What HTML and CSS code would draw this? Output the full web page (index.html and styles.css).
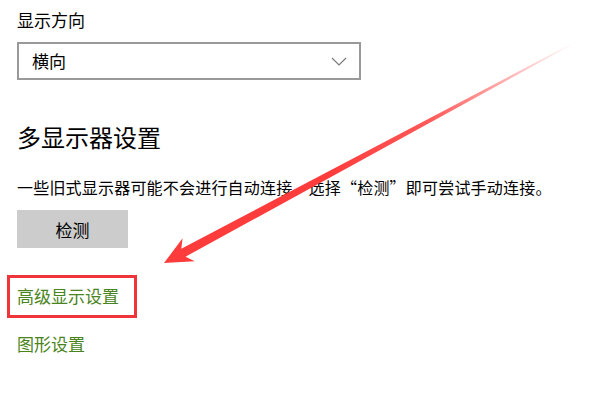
FILE: index.html
```html
<!DOCTYPE html>
<html lang="zh-CN">
<head>
    <meta charset="UTF-8">
    <meta name="viewport" content="width=device-width, initial-scale=1.0">
    <title>显示设置</title>
    <link rel="stylesheet" href="styles.css">
</head>
<body>

    <div id="settings">
        <div class="field-label">显示方向</div>
        <div class="select-box">
            <span class="select-value">横向</span>
            <svg class="chevron" width="16" height="9" viewBox="0 0 16 9">
                <polyline points="1,1 8,8 15,1" fill="none" stroke="#7a7a7a" stroke-width="1.2"/>
            </svg>
        </div>

        <h2 class="section-title">多显示器设置</h2>
        <p class="section-text">一些旧式显示器可能不会进行自动连接，选择“检测”即可尝试手动连接。</p>
        <button class="detect-button">检测</button>

        <div class="marked-box">
            <a href="#" class="setting-link">高级显示设置</a>
        </div>
        <a href="#" class="setting-link graphics-link">图形设置</a>
    </div>

    <!-- red annotation arrow on top of the page -->
    <svg id="arrow" width="600" height="400" viewBox="0 0 600 400">
        <defs>
            <linearGradient id="arrow-fade" gradientUnits="userSpaceOnUse" x1="574" y1="43" x2="164" y2="263">
                <stop offset="0" stop-color="#ff3c3c" stop-opacity="0"/>
                <stop offset="0.35" stop-color="#ff3c3c" stop-opacity="0.85"/>
                <stop offset="0.6" stop-color="#ff3c3c" stop-opacity="1"/>
            </linearGradient>
        </defs>
        <polygon fill="url(#arrow-fade)"
                 points="574.3,43.5 185.5,256.7 194.8,261.3 164,263 182.6,238.3 181.3,248.7 573.7,42.5"/>
    </svg>

</body>
</html>
```

FILE: styles.css
```css
* {
    box-sizing: border-box;
}

body, html {
    margin: 0;
    background-color: #ffffff;
    font-family: "Noto Sans CJK SC", "Noto Sans", sans-serif;
    color: #000000;
}

#settings {
    display: flex;
    flex-direction: column;
    align-items: flex-start;
    padding: 8px 0 0 17px;
}

.field-label {
    font-size: 17px;
    line-height: 24px;
}

.select-box {
    margin-top: 10px;
    width: 344px;
    height: 38px;
    border: 2px solid #999999;
    display: flex;
    align-items: center;
    justify-content: space-between;
    padding: 0 12px 0 13px;
}

.select-value {
    font-size: 17px;
    line-height: 24px;
}

.chevron {
    display: block;
}

.section-title {
    margin: 40px 0 0 0;
    font-size: 24px;
    font-weight: normal;
    line-height: 34px;
}

.section-text {
    margin: 21px 0 0 0;
    font-size: 16px;
    letter-spacing: 0.2px;
    line-height: 24px;
    white-space: nowrap;
}

.detect-button {
    margin-top: 11px;
    width: 111px;
    height: 38px;
    border: none;
    background-color: #cccccc;
    font-family: inherit;
    font-size: 17px;
    color: #000000;
    padding: 0;
}

/* red frame round the advanced settings link */
.marked-box {
    margin: 27px 0 0 -10px;
    border: 3px solid #f0353a;
    padding: 6px 15px 7px 7px;
    display: flex;
}

.setting-link {
    font-size: 17px;
    line-height: 24px;
    color: #4a8420;
    text-decoration: none;
}

.graphics-link {
    margin-top: 14px;
}

#arrow {
    position: absolute;
    top: 0;
    left: 0;
    pointer-events: none;
}
```
